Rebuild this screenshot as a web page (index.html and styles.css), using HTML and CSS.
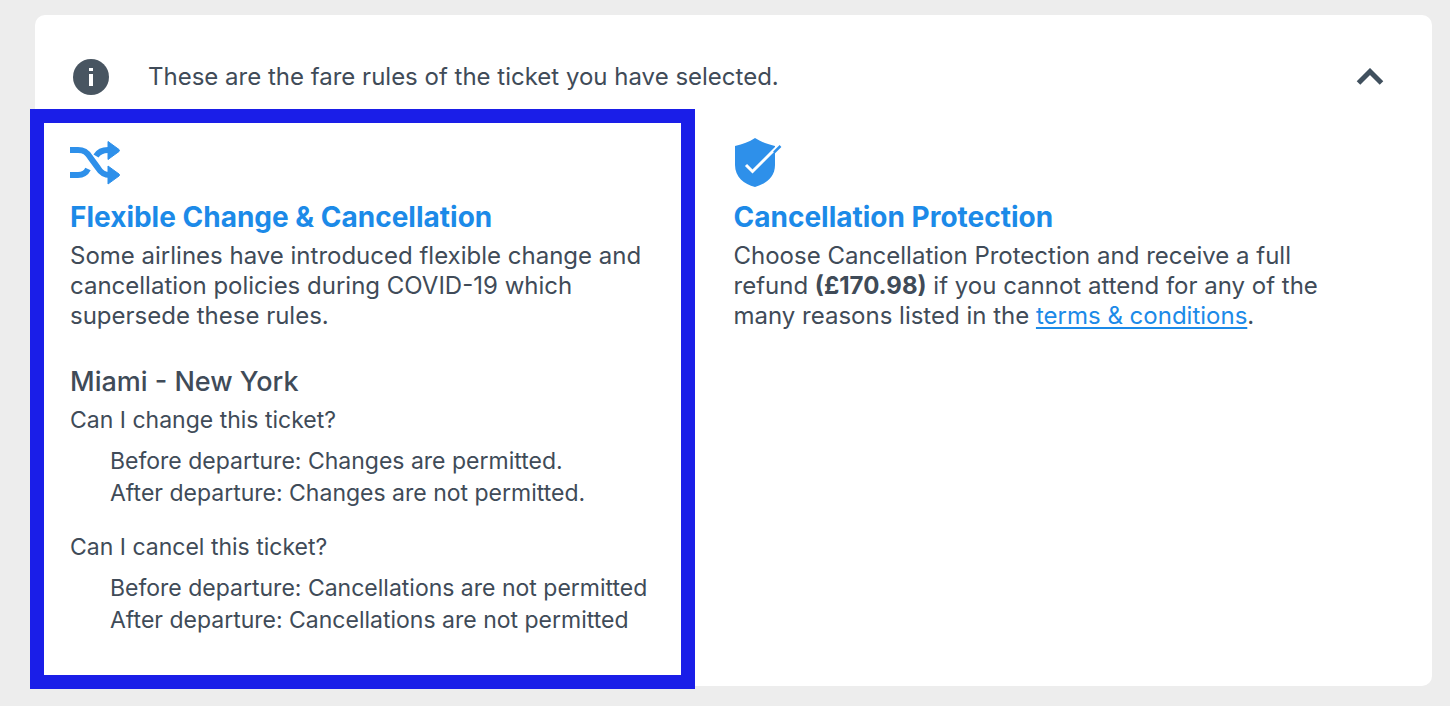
FILE: index.html
```html
<!DOCTYPE html>
<html lang="en">
<head>
  <meta charset="utf-8">
  <title>Fare Rules</title>
  <link rel="stylesheet" href="styles.css">
</head>
<body>
  <main class="card">
    <!-- Header -->
    <header class="card-header">
      <svg class="info-icon" viewBox="0 0 36 36" aria-hidden="true">
        <circle cx="18" cy="18" r="18" fill="#485561"/>
        <rect x="16" y="9" width="4" height="3" fill="#fff"/>
        <rect x="16" y="15" width="4" height="12" fill="#fff"/>
      </svg>
      <p class="card-title">These are the fare rules of the ticket you have selected.</p>
      <button type="button" class="toggle" aria-label="Hide fare rules">
        <svg viewBox="0 0 28 18" width="28" height="18" aria-hidden="true">
          <path d="M2.500 15 14 3.500l11.500 11.500" fill="none" stroke="#40505e" stroke-width="5"/>
        </svg>
      </button>
    </header>

    <div class="columns">
      <!-- Change and cancellation rules -->
      <section class="panel highlighted">
        <svg class="panel-icon" viewBox="0 0 52 50" aria-hidden="true">
          <g fill="none" stroke="#2e90ea" stroke-width="6">
            <path d="M0 12h8c6 0 9 2 12 7l8 11c3 5 6 7 12 7"/>
            <path d="M0 37h8c5 0 8-2 10-6"/>
            <path d="M26 18c2.500-4 6-6 12-6"/>
          </g>
          <path d="M38 3.500 49 11.500q1 1 0 2L38 21.500z M38 28 49 36q1 1 0 2L38 46z" fill="#2e90ea" stroke="#2e90ea" stroke-linejoin="round"/>
        </svg>
        <h2>Flexible Change &amp; Cancellation</h2>
        <p class="description">Some airlines have introduced flexible change and cancellation policies during COVID-19 which supersede these rules.</p>

        <h3>Miami - New York</h3>
        <p class="question">Can I change this ticket?</p>
        <ul class="rules">
          <li>Before departure: Changes are permitted.</li>
          <li>After departure: Changes are not permitted.</li>
        </ul>
        <p class="question">Can I cancel this ticket?</p>
        <ul class="rules">
          <li>Before departure: Cancellations are not permitted</li>
          <li>After departure: Cancellations are not permitted</li>
        </ul>
      </section>

      <!-- Cancellation protection -->
      <section class="panel">
        <svg class="panel-icon" viewBox="0 0 52 50" aria-hidden="true">
          <path d="M21 0c6 4 12 6 20 8v19c0 12-9 19-20 22C10 46 1 39 1 27V8C9 6 15 4 21 0z" fill="#2e90ea"/>
          <path d="M12 27 18.500 33.500 43 9" fill="none" stroke="#fff" stroke-width="3"/>
          <path d="M40 14.500 46.500 8" fill="none" stroke="#2e90ea" stroke-width="2.500"/>
        </svg>
        <h2>Cancellation Protection</h2>
        <p class="description">Choose Cancellation Protection and receive a full refund <strong>(£170.98)</strong> if you cannot attend for any of the many reasons listed in the <a href="#">terms &amp; conditions</a>.</p>
      </section>
    </div>
  </main>
</body>
</html>
```

FILE: styles.css
```css
* {
  box-sizing: border-box;
}

body {
  font-family: Inter, "Liberation Sans", sans-serif;
  background-color: #ededed;
  color: #404b58;
  margin: 0;
  padding: 15px 18px 17px 35px;
}

h2,
h3,
p,
ul {
  margin: 0;
  padding: 0;
}

.card {
  background-color: #fff;
  border-radius: 10px;
}

.card-header {
  display: flex;
  align-items: center;
  padding: 40px 48px 10px 38px;
}

.info-icon {
  width: 36px;
  height: 36px;
}

.card-title {
  flex: 1;
  margin-left: 39px;
  font-size: 24px;
  line-height: 44px;
}

.toggle {
  display: flex;
  padding: 0;
  border: none;
  background: none;
  cursor: pointer;
}

.columns {
  display: grid;
  grid-template-columns: 1fr 1fr;
}

.panel {
  padding: 29px 100px 40px 0;
}

.highlighted {
  margin: 0 39px -3px -5px;
  padding: 15px 14px 39px 26px;
  border: 14px solid #1a1ee8;
}

.panel-icon {
  display: block;
  width: 52px;
  height: 50px;
}

h2 {
  margin-top: 11px;
  color: #1c8ae8;
  font-size: 28px;
  font-weight: 700;
  line-height: 36px;
}

.description {
  margin-top: 6px;
  font-size: 24px;
  line-height: 30px;
}

.description a {
  color: #1c8ae8;
  text-decoration-thickness: 2px;
  text-underline-offset: 3px;
}

h3 {
  margin-top: 33px;
  font-size: 27px;
  font-weight: 500;
  line-height: 36px;
}

.question {
  font-size: 23px;
  line-height: 40px;
}

.rules {
  margin: 5px 0 18px;
  padding-left: 40px;
  list-style: none;
  font-size: 23px;
  line-height: 32px;
}

.rules:last-child {
  margin-bottom: 0;
}
```
